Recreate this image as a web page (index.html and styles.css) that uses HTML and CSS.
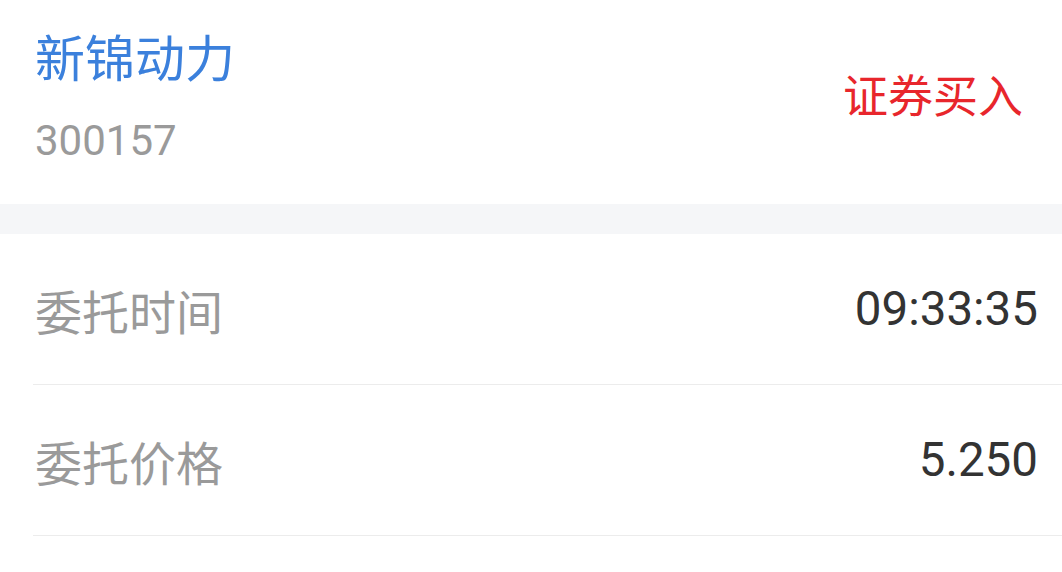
FILE: index.html
```html
<!DOCTYPE html>
<html lang="zh-CN">
<head>
<meta charset="utf-8">
<title>委托详情</title>
<link rel="stylesheet" href="styles.css">
</head>
<body>
<div class="page">
  <header class="stock-head">
    <div class="stock-info">
      <div class="stock-name">新锦动力</div>
      <div class="stock-code">300157</div>
    </div>
    <div class="trade-type">证券买入</div>
  </header>
  <div class="spacer"></div>
  <section class="detail-list">
    <div class="detail-row">
      <span class="detail-label">委托时间</span>
      <span class="detail-value">09:33:35</span>
    </div>
    <div class="detail-row">
      <span class="detail-label">委托价格</span>
      <span class="detail-value">5.250</span>
    </div>
  </section>
</div>
</body>
</html>
```

FILE: styles.css
```css
html, body {
  margin: 0;
  padding: 0;
  background: #ffffff;
}

body {
  font-family: Roboto, "Noto Sans CJK SC", sans-serif;
  width: 1062px;
  height: 572px;
  overflow: hidden;
}

.page {
  display: flex;
  flex-direction: column;
}

.stock-head {
  height: 204px;
  box-sizing: border-box;
  padding: 30px 39px 39px 35px;
  display: flex;
  align-items: center;
  justify-content: space-between;
}

.stock-info {
  display: flex;
  flex-direction: column;
  gap: 27px;
}

.stock-name {
  font-size: 50px;
  line-height: 60px;
  color: #3b80dc;
}

.stock-code {
  font-size: 42px;
  line-height: 48px;
  color: #9a9a9a;
}

.trade-type {
  font-size: 45px;
  line-height: 56px;
  color: #e8262c;
}

.spacer {
  height: 30px;
  background: #f5f6f8;
}

.detail-list {
  display: flex;
  flex-direction: column;
  margin-left: 33px;
}

.detail-row {
  height: 151px;
  box-sizing: border-box;
  padding: 0 24px 0 2px;
  border-bottom: 1px solid #ececec;
  display: flex;
  align-items: center;
  justify-content: space-between;
}

.detail-label {
  font-size: 47px;
  color: #9a9a9a;
}

.detail-value {
  font-size: 47.5px;
  color: #333333;
}
```
